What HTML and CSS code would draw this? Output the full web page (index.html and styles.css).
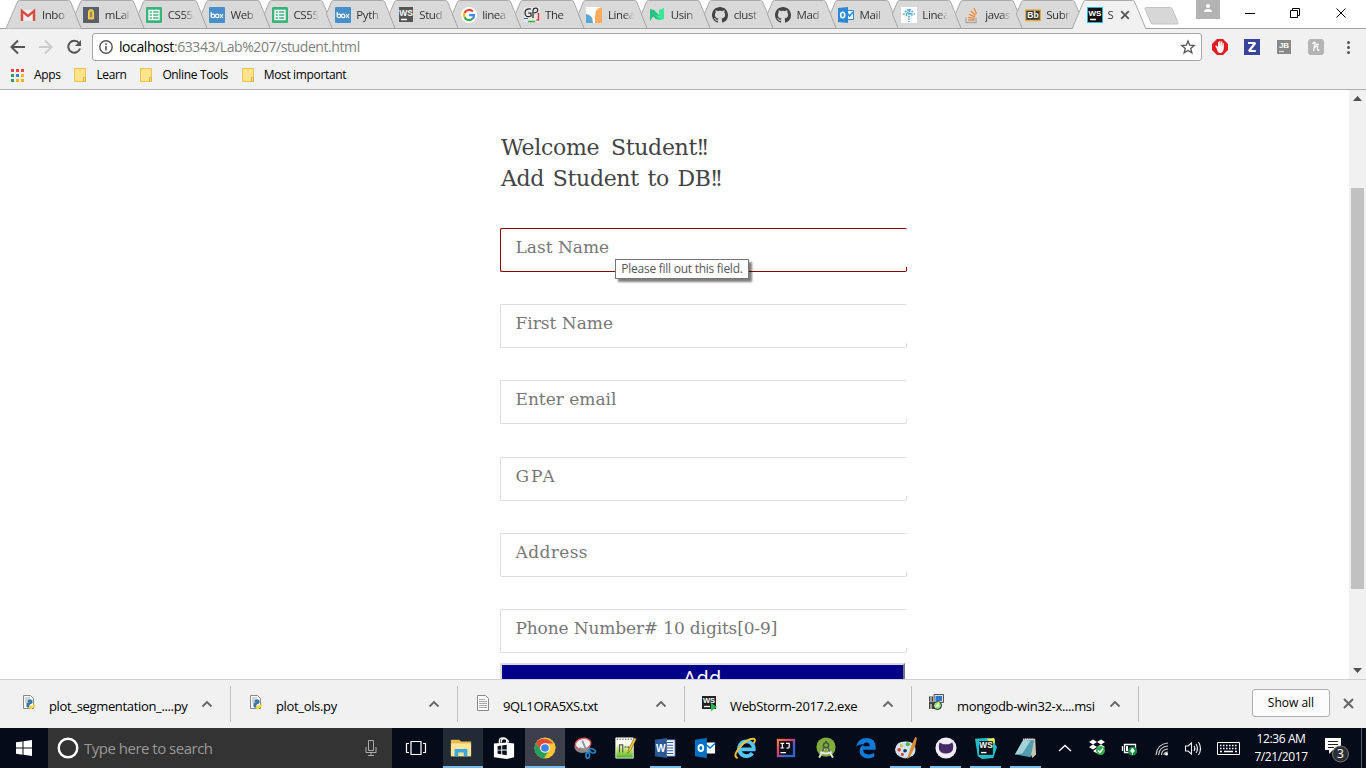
FILE: index.html
```
<!DOCTYPE html>
<html lang="en">
<head>
<meta charset="utf-8">
<title>Student</title>
<link rel="stylesheet" href="styles.css">
</head>
<body>
<svg class="defs" aria-hidden="true">
  <symbol id="tabshape" viewBox="0 0 76 28"><path d="M12.2 28.5 6.4 14 11.5 1.8Q12.2.5 13.500.5H62.5Q64 .5 64.6 1.8L75.5 28.5" fill="#d9d9d9" stroke="#aaa"/></symbol>
  <symbol id="sheet" viewBox="0 0 16 16"><rect width="16" height="16" rx="1" fill="#3db37c"/><path d="M3 3.5h10v9H3zM3 6.5h10M3 9.5h10M6.5 3.5v9" fill="none" stroke="#fff" stroke-width="1.3"/></symbol>
  <symbol id="box" viewBox="0 0 16 16"><rect width="16" height="16" rx="1" fill="#468fcb"/><g fill="none" stroke="#fff" stroke-width="1.2"><path d="M2.200 5v5"/><circle cx="4" cy="8.900" r="1.700"/><circle cx="8.200" cy="8.900" r="1.700"/><path d="m11 7 3 4m0-4-3 4"/></g></symbol>
  <symbol id="github" viewBox="0 0 16 16"><path fill="#444" d="M8 0C3.58 0 0 3.58 0 8c0 3.54 2.29 6.53 5.47 7.59.4.07.55-.17.55-.38 0-.19-.01-.82-.01-1.49-2.01.37-2.53-.49-2.69-.94-.09-.23-.48-.94-.82-1.13-.28-.15-.68-.52-.01-.53.63-.01 1.08.58 1.23.82.72 1.21 1.87.87 2.33.66.07-.52.28-.87.51-1.07-1.78-.2-3.64-.89-3.64-3.95 0-.87.31-1.59.82-2.15-.08-.2-.36-1.02.08-2.12 0 0 .67-.21 2.2.82.64-.18 1.32-.27 2-.27s1.36.09 2 .27c1.53-1.04 2.2-.82 2.2-.82.44 1.1.16 1.92.08 2.12.51.56.82 1.27.82 2.15 0 3.07-1.87 3.75-3.65 3.95.29.25.54.73.54 1.48 0 1.07-.01 1.93-.01 2.2 0 .21.15.46.55.38A8 8 0 0 0 16 8c0-4.42-3.58-8-8-8z"/></symbol>
  <symbol id="folder" viewBox="0 0 12 14"><path d="M.5.5h11v13H.5z" fill="#ffe38f" stroke="#eac54f"/><path d="M9.5 13.500v-4h2v4z" fill="#ffe38f" stroke="#e0b435"/></symbol>
  <symbol id="py" viewBox="0 0 14 16"><path d="M1.500.5h7l3 3v10h-10z" fill="#fff" stroke="#888"/><path d="M3 3h5M3 5h4M3 7h2" stroke="#aaa"/><path d="M5 10V8h3V7H6V5.500q2-1.500 4 0V8L7 9.500V12H5z" fill="#3a76a8" stroke="#3a76a8"/><path d="M12 8.500q2 2 .5 4H10V14q-3 .5-3-1v-2.500h4z" fill="#fdd545"/></symbol>
  <symbol id="up" viewBox="0 0 12 8"><path d="m1.500 6.500 4.500-4.500 4.500 4.500" fill="none" stroke="#666" stroke-width="1.800"/></symbol>
</svg>

<header class="browser">
  <div class="tabstrip">
    <div class="tab"><svg class="shape" viewBox="0 0 76 28"><path d="M0 28.500 11.500 1.800Q12.200.5 13.500.5H62.500Q64 .5 64.600 1.800L75.500 28.500" fill="#d9d9d9" stroke="#aaa"/></svg><svg class="fav" viewBox="0 0 16 16"><path d="M1 3h14v11H1z" fill="#eee"/><path d="M2 14V4l6 5 6-5v10" fill="none" stroke="#dd4b3e" stroke-width="2.400"/></svg><span>Inbo</span></div>
    <div class="tab"><svg class="shape"><use href="#tabshape"/></svg><svg class="fav" viewBox="0 0 16 16"><path d="M0 0h16v16H0z" fill="#596068"/><path d="M5.500 12V5a2.500 2.500 0 0 1 5 0v7z" fill="#eab945" stroke="#f4d25c"/><path d="M8 5v5M5 13.500h6" stroke="#555"/></svg><span>mLal</span></div>
    <div class="tab"><svg class="shape"><use href="#tabshape"/></svg><svg class="fav"><use href="#sheet"/></svg><span>CS55</span></div>
    <div class="tab"><svg class="shape"><use href="#tabshape"/></svg><svg class="fav"><use href="#box"/></svg><span>Web</span></div>
    <div class="tab"><svg class="shape"><use href="#tabshape"/></svg><svg class="fav"><use href="#sheet"/></svg><span>CS55</span></div>
    <div class="tab"><svg class="shape"><use href="#tabshape"/></svg><svg class="fav"><use href="#box"/></svg><span>Pyth</span></div>
    <div class="tab"><svg class="shape"><use href="#tabshape"/></svg><svg class="fav" viewBox="0 0 16 16"><path d="M1 0h14v15H1z" fill="#555"/><text x="8" y="8.500" class="glyph" font-size="8.500">WS</text><path d="M3 12.500h6" stroke="#fff" stroke-width="1.500"/></svg><span>Stud</span></div>
    <div class="tab"><svg class="shape"><use href="#tabshape"/></svg><svg class="fav" viewBox="0 0 16 16"><circle cx="8" cy="8" r="8" fill="#fff"/><g fill="none" stroke-width="2.200"><path d="M11.800 4.500A5 5 0 0 0 3.500 6" stroke="#ea4335"/><path d="M3.500 6a5 5 0 0 0 0 4.200" stroke="#fbbc05"/><path d="M3.500 10.200a5 5 0 0 0 8 1.500" stroke="#34a853"/><path d="M11.500 11.700Q13 10.500 13 8.200H8.200" stroke="#4285f4"/></g></svg><span>linea</span></div>
    <div class="tab"><svg class="shape"><use href="#tabshape"/></svg><svg class="fav" viewBox="0 0 16 16"><path d="M0 0h16v15H0z" fill="#e6e6e6"/><path d="M7 2Q1 1 1 6t6 3V6H4" fill="none" stroke="#222" stroke-width="1.200"/><path d="M9 11V4q0-3 3-3 3 1 1 4l-3 1" fill="none" stroke="#222" stroke-width="1.200"/><path d="M0 11.500h4" stroke="#36c"/><path d="M4 14.500h7" stroke="#3b3" stroke-width="1.500"/><path d="M14.500 6v7h-2" fill="none" stroke="#e33" stroke-width="1.500"/></svg><span>The</span></div>
    <div class="tab"><svg class="shape"><use href="#tabshape"/></svg><svg class="fav" viewBox="0 0 16 16"><path d="M0 0h16v16H0z" fill="#fff"/><path d="M0 7q7 1 7 9H0z" fill="#5ba8d4"/><path d="M16 0v16H9V9Q9 1 16 0z" fill="#ffad5c"/></svg><span>Linea</span></div>
    <div class="tab"><svg class="shape"><use href="#tabshape"/></svg><svg class="fav" viewBox="0 0 16 16"><path d="m1 2 4 1 6 6v4L7 12 4 9.500 1 14z" fill="#27c281"/><path d="m10 3 5-2v11l-4 1-5-5 4 1z" fill="#3ae895"/></svg><span>Usin</span></div>
    <div class="tab"><svg class="shape"><use href="#tabshape"/></svg><svg class="fav"><use href="#github"/></svg><span>clust</span></div>
    <div class="tab"><svg class="shape"><use href="#tabshape"/></svg><svg class="fav"><use href="#github"/></svg><span>Mad</span></div>
    <div class="tab"><svg class="shape"><use href="#tabshape"/></svg><svg class="fav" viewBox="0 0 16 16"><path d="M9 3.500h6.500v9H9z" fill="#fff" stroke="#2b88d4"/><path d="m9 6 2.500 3L15 5" fill="none" stroke="#2b88d4" stroke-width="1.500"/><path d="m0 1 10-1v16L0 15z" fill="#2b88d4"/><ellipse cx="4.700" cy="8" rx="2" ry="2.700" fill="none" stroke="#fff" stroke-width="1.600"/></svg><span>Mail</span></div>
    <div class="tab"><svg class="shape"><use href="#tabshape"/></svg><svg class="fav" viewBox="0 0 16 16"><path d="M0 0h16v16H0z" fill="#fff"/><path d="M2 7h4m4 0h4M4 5l4-3 4 3M5 9l3-5 3 5M8 6v9" fill="none" stroke="#54a8cf" stroke-width="1.700" stroke-dasharray="1.700 1"/></svg><span>Linea</span></div>
    <div class="tab"><svg class="shape"><use href="#tabshape"/></svg><svg class="fav" viewBox="0 0 16 16"><path d="M2 10.500v5h10v-5" fill="none" stroke="#aaa" stroke-width="1.300"/><path d="M4 13h6.500M4 10.300l6.500 1M5 7.300l6 2.500M7 4l4.500 4.500M10 1l2.500 6" stroke="#f08a3c" stroke-width="1.300"/></svg><span>javas</span></div>
    <div class="tab shift"><svg class="shape"><use href="#tabshape"/></svg><svg class="fav" viewBox="0 0 16 16"><path d="M.7 3h14.600v10.500H.7z" fill="#333" stroke="#e4ad42" stroke-width="1.300"/><text x="8" y="11.300" class="glyph" font-size="8.500">Bb</text></svg><span>Subr</span></div>
    <div class="tab active"><svg class="shape" viewBox="0 0 76 29"><path d="M0 29 11.500 1.800Q12.200.5 13.500.5H60.500Q62 .5 62.600 1.800L74 29" fill="#f1f1f1" stroke="#aaa"/></svg><svg class="fav" viewBox="0 0 16 16"><path d="M.5.500h15v15H.5z" fill="#111" stroke="#20bcdf"/><text x="8" y="8.500" class="glyph" font-size="8">WS</text><path d="M3 12.500h6" stroke="#fff" stroke-width="1.500"/></svg><span>S</span><svg class="tabclose" viewBox="0 0 10 10"><path d="m1.200 1.200 7.600 7.600m0-7.600-7.600 7.600" stroke="#555" stroke-width="1.800"/></svg></div>
    <svg class="newtab" viewBox="0 0 36 18"><path d="M3 .5h23q1.500 0 2 1l6 14q.5 1.500-1 1.500H9q-1.500 0-2-1L1 2Q.5.500 3 .5z" fill="#d7d7d7" stroke="#c3c3c3"/></svg>
    <svg class="avatar" viewBox="0 0 24 19"><path d="M0 0h24v19H0z" fill="#b3b3b3"/><circle cx="12" cy="6" r="2" fill="#fff"/><path d="M8 12q0-3 4-3t4 3z" fill="#fff"/></svg>
    <svg class="winctl" viewBox="0 0 100 12"><path d="M0 6.500h10M45.500 3.500h7v7h-7zM47.500 3.500v-2h7v7h-2M91.500 1.500l9 9m0-9-9 9" fill="none" stroke="#000"/></svg>
  </div>
  <div class="toolbar">
    <svg class="nav" viewBox="0 0 92 28"><g fill="none" stroke-width="2"><path d="M25 14H12m6-6.500L11.500 14l6.500 6.500" stroke="#555"/><path d="M39 14h12m-6-6.500 6.500 6.500-6.500 6.500" stroke="#ccc"/><path d="M79 10a6 6 0 1 0 1 5.500" stroke="#555"/></g><path d="M81 7v6h-6z" fill="#555"/></svg>
    <div class="omnibox">
      <svg class="info" viewBox="0 0 14 14"><circle cx="7" cy="7" r="6.200" fill="none" stroke="#555" stroke-width="1.400"/><path d="M7 6v4.500M7 3.300v1.600" stroke="#555" stroke-width="1.600"/></svg>
      <span class="url"><b>localhost</b>:63343/Lab%207/student.html</span>
      <svg class="star" viewBox="0 0 14 14"><path d="m7 1 1.700 4.200 4.500.3-3.500 2.900 1.200 4.500L7 10.400l-3.900 2.500 1.200-4.500L.8 5.500l4.500-.3z" fill="none" stroke="#555" stroke-width="1.300"/></svg>
    </div>
    <div class="exts">
      <svg viewBox="0 0 16 16"><path d="M5 0h6l5 5v6l-5 5H5l-5-5V5z" fill="#e01b22"/><path d="M4.500 9 3.200 7l1.300-.5L6 8V3h1v4l.3-5h1.200v5l.6-4.500h1.200V8l.5-4h1v5q-.3 5-4 5-2 0-3.300-5z" fill="#fff"/></svg>
      <svg viewBox="0 0 16 16"><path d="M0 0h16v16H0z" fill="#38459a"/><path d="M4 4h7.200L5 12h6.800" fill="none" stroke="#fff" stroke-width="2.200" stroke-linejoin="bevel"/></svg>
      <svg viewBox="0 0 16 16"><path d="M1 1h14v14H1z" fill="#888"/><text x="8" y="9" class="glyph" font-size="8">JB</text><path d="M3 12.500h5" stroke="#ddd" stroke-width="1.300"/></svg>
      <svg viewBox="0 0 16 16"><rect width="16" height="16" rx="3" fill="#b4b4b4"/><path d="M4.500 5q3-3.500 2.500 0L5.500 12M6.500 8.500q3.500-3 3 0-.5 3.500 2 2.500M8 5.500h3" fill="none" stroke="#fff" stroke-width="1.300"/></svg>
      <svg viewBox="0 0 16 16"><circle cx="8.500" cy="3.500" r="1.500" fill="#555"/><circle cx="8.500" cy="8.500" r="1.500" fill="#555"/><circle cx="8.500" cy="13.500" r="1.500" fill="#555"/></svg>
    </div>
  </div>
  <nav class="bookmarks">
    <a><svg class="apps" viewBox="0 0 13 13"><path d="M0 0h3v3H0zm5 0h3v3H5zm5 0h3v3h-3z" fill="#e8453c"/><path d="M0 5h3v3H0zm0 5h3v3H0z" fill="#2f9e58"/><path d="M5 5h3v3H5z" fill="#3b82f0"/><path d="M10 5h3v3h-3zm-5 5h3v3H5zm5 0h3v3h-3z" fill="#f9b411"/></svg><span>Apps</span></a>
    <a><svg class="folder"><use href="#folder"/></svg><span>Learn</span></a>
    <a><svg class="folder"><use href="#folder"/></svg><span>Online Tools</span></a>
    <a><svg class="folder"><use href="#folder"/></svg><span>Most important</span></a>
  </nav>
</header>

<main class="page">
  <form class="form">
    <h1><span class="w1">Welcome Student</span><span class="bang">!!</span><br><span class="w2">Add Student to DB</span><span class="bang">!!</span></h1>
    <div class="field invalid"><span>Last Name</span><div class="tooltip">Please fill out this field.</div></div>
    <div class="field"><span>First Name</span></div>
    <div class="field"><span>Enter email</span></div>
    <div class="field gpa"><span>GPA</span></div>
    <div class="field address"><span>Address</span></div>
    <div class="field last"><span>Phone Number# 10 digits[0-9]</span></div>
    <div class="add">Add</div>
  </form>
  <div class="scrollbar">
    <svg viewBox="0 0 17 17"><path d="m4 11 4.500-5 4.500 5z" fill="#505050"/></svg>
    <div class="thumb"></div>
    <svg viewBox="0 0 17 17"><path d="m4 6 4.500 5L13 6z" fill="#505050"/></svg>
  </div>
</main>

<section class="downloads">
  <div class="dl"><svg class="file"><use href="#py"/></svg><span>plot_segmentation_....py</span><svg class="up"><use href="#up"/></svg></div>
  <div class="dl"><svg class="file"><use href="#py"/></svg><span>plot_ols.py</span><svg class="up"><use href="#up"/></svg></div>
  <div class="dl"><svg class="file" viewBox="0 0 14 16"><path d="M1.500.5h8l3 3v12h-11z" fill="#fff" stroke="#888"/><path d="M3 4.500h6m-6 2h8m-8 2h8m-8 2h8m-8 2h8" stroke="#aaa"/></svg><span>9QL1ORA5XS.txt</span><svg class="up"><use href="#up"/></svg></div>
  <div class="dl"><svg class="file" viewBox="0 0 14 16"><path d="M-1 1h14v13H-1z" fill="#222"/><text x="6" y="7.500" class="glyph" font-size="7.500">WS</text><path d="M1 11.500h6" stroke="#fff" stroke-width="1.300"/><path d="m8 8 6 4-6 4z" fill="#2ab34a"/></svg><span>WebStorm-2017.2.exe</span><svg class="up"><use href="#up"/></svg></div>
  <div class="dl"><svg class="file" viewBox="1 1 14 16"><path d="M5 .5h9.500v8H5z" fill="#ddd" stroke="#555"/><path d="M6.500 2H13v5H6.500z" fill="#2878d8"/><path d="M0 2.500h4v5H0zM0 8h10v7H0z" fill="#444"/><path d="M2 3v4m0 3v5" stroke="#fff"/><circle cx="8.500" cy="11.500" r="4" fill="#8fe08b" stroke="#222"/><path d="m6 13 2.500-1.500L10 8" stroke="#fe4" stroke-width="1.500" fill="none"/><circle cx="8.500" cy="11.500" r="1.200" fill="#fff"/></svg><span>mongodb-win32-x....msi</span><svg class="up"><use href="#up"/></svg></div>
  <div class="showall">Show all</div>
  <svg class="dlclose" viewBox="0 0 11 11"><path d="m1 1 9 9m0-9-9 9" stroke="#666" stroke-width="2"/></svg>
</section>

<footer class="taskbar">
  <div class="start"><svg width="16" height="16" viewBox="0 0 16 16"><path d="m0 2.300 6.500-.9v6.100H0zM7.500 1.200 16 0v7.500H7.500zM0 8.500h6.500v6.200L0 13.800zm7.500 0H16V16l-8.500-1.200z" fill="#fff"/></svg></div>
  <div class="search"><svg width="22" height="22" viewBox="0 0 22 22"><circle cx="11" cy="11" r="9.300" fill="none" stroke="#fff" stroke-width="2.400"/></svg><span>Type here to search</span><svg class="mic" viewBox="0 0 12 18"><path d="M3.500 1.500h5v10h-5zM1 8v5.500h10V8M6 14v3M3 16.500h6" fill="none" stroke="#aaa"/></svg></div>
  <div class="tv"><svg width="20" height="16" viewBox="0 0 20 16"><path d="M5 1.500h10v13H5zM3 3.500H.5v9H3m14-9h2.500v9H17" fill="none" stroke="#fff" stroke-width="1.200"/></svg></div>
  <div class="app explorer open"><svg viewBox="0 0 24 24"><path d="M1 3h9l2 2h11v16H1z" fill="#e9bd4a"/><path d="M1 7h22v14H1z" fill="#ffe59a"/><path d="M5 21v-8h14v8h-4v-4H9v4z" fill="#36a9e1"/></svg></div>
  <div class="app store"><svg viewBox="0 0 24 24"><path d="M7 7V4q0-3 4-3t4 3v3M9 6q0-5 4-4t4 4" fill="none" stroke="#fff" stroke-width="1.500"/><path d="m1 7 14-1 8 1v15l-8 2-14-2z" fill="#fff"/><path d="m5 10 4-.6v4.400H5zm5-.7 5-.8v5.200h-5zM5 14.600h4v4.300l-4-.5zm5 0h5v5.200l-5-.8z" fill="#0b1020"/></svg></div>
  <div class="app chrome open"><svg viewBox="0 0 24 24"><circle cx="12" cy="12" r="11.500" fill="#f9c734"/><path d="M12 12H22.500A11.500 11.500 0 0 0 2 6.500l5.500 8z" fill="#e14a3c"/><path d="M2 6.500A11.500 11.500 0 0 0 11 23.500l5-9-8.500 0z" fill="#25a05a"/><path d="M12 7h10.500l1 5-8.500 6-3 5 5-8z" fill="#f9c734"/><circle cx="12" cy="12" r="5.300" fill="#fff"/><circle cx="12" cy="12" r="4.200" fill="#3f83ee"/></svg></div>
  <div class="app"><svg viewBox="0 0 24 24"><ellipse cx="9" cy="11" rx="8.500" ry="6.500" fill="#888"/><ellipse cx="10" cy="7.500" rx="8.500" ry="6" fill="#f2f2f2" stroke="#d35b60" stroke-width="1.500" transform="rotate(-10 10 8)"/><path d="m6 12 12 4M9 4l6 14" stroke="#8d9298" stroke-width="2"/><g fill="none" stroke="#2584cb" stroke-width="1.800"><ellipse cx="15" cy="20" rx="2" ry="3.300"/><ellipse cx="20" cy="15" rx="3.500" ry="2" transform="rotate(25 20 15)"/></g></svg></div>
  <div class="app"><svg viewBox="0 0 24 24"><defs><linearGradient id="npp" x2="0" y2="1"><stop offset=".3" stop-color="#fbfff0"/><stop offset=".65" stop-color="#b5df59"/><stop offset="1" stop-color="#45ad2c"/></linearGradient></defs><path d="M2 1h19v22H2z" fill="url(#npp)" stroke="#eee"/><path d="M3 2.500h17" stroke="#888" stroke-width="1.500" stroke-dasharray="1.500 1.500"/><path d="M6 8v9M6 8.500h3.500V17m2-6h2m1 0h2" fill="none" stroke="#555" stroke-width="1.300"/><path d="m15 18 1-5 6-12 2.500 1-6 12z" fill="#f2c238" stroke="#704e22" stroke-width=".6"/></svg></div>
  <div class="app open"><svg viewBox="0 0 24 24"><path d="M12 3h11v18H12z" fill="#fff" stroke="#2b5797"/><path d="M14 6h7m-7 3h7m-7 3h7m-7 3h7m-7 3h7" stroke="#2b5797" stroke-width="1.300"/><path d="m1 3 13-2v22L1 21z" fill="#2b5797"/><text x="7.500" y="16" class="glyph" font-size="11">W</text></svg></div>
  <div class="app"><svg viewBox="0 0 24 24"><path d="M12 6h11v12H12z" fill="#fff"/><path d="m12 7 5.500 5L23 7" fill="none" stroke="#0072c6" stroke-width="1.500"/><path d="m1 3 13-2v22L1 21z" fill="#0072c6"/><ellipse cx="7.500" cy="12" rx="2.600" ry="3.300" fill="none" stroke="#fff" stroke-width="2"/></svg></div>
  <div class="app"><svg viewBox="0 0 24 24"><path d="M20 17.500a8 8 0 1 1 1.500-4H7.500" fill="none" stroke="#54c5f4" stroke-width="4.200"/><path d="M4 23Q-2 21 6.500 11T22 2q2 1-.5 5" fill="none" stroke="#f5c431" stroke-width="2"/></svg></div>
  <div class="app"><svg viewBox="0 0 24 24"><defs><linearGradient id="ij" x2="1" y2="1"><stop stop-color="#f68b2c"/><stop offset=".4" stop-color="#e23b73"/><stop offset=".7" stop-color="#2f65db"/></linearGradient></defs><path d="M2 2h20v20H2z" fill="url(#ij)"/><path d="M4.500 4.500h15v15h-15z" fill="#101018"/><path d="M6 7h4M8 7v5m-2 0h4m2-5h3.500v4q0 1.500-3 1M6 17h6" fill="none" stroke="#fff" stroke-width="1.300"/></svg></div>
  <div class="app"><svg viewBox="0 0 24 24"><circle cx="12" cy="11" r="10.500" fill="#80ac3d"/><path d="m11 11-6.500 11.500M13 11l6.500 11.500M6 16q6 4 12 0" fill="none" stroke="#e4e8e2" stroke-width="2.200"/><path d="m11 9-3 7M13 9l3 7M12 4v3" stroke="#536344" stroke-width="2"/><circle cx="12" cy="9" r="2.800" fill="#80ac3d" stroke="#455838" stroke-width="1.700"/></svg></div>
  <div class="app"><svg viewBox="0 0 24 24"><path d="M1 11Q3 1 13 1q9.500 1 9.500 9v4H9q0 5 6 5 3 0 6-1.500V21.500q-3 2-7 2-9-1-9-9 1-5 5-6.500-6-.5-9 3zm8-1h7q0-4-3.500-4T9 10z" fill="#0f7ad8"/></svg></div>
  <div class="app open"><svg viewBox="0 0 24 24"><path d="M0 14Q1 5 11 5t11 6q1 6-2 9-5 4-11 3-8-2-9-9z" fill="#cfe4f0"/><circle cx="4.500" cy="14" r="2" fill="#d64a38"/><circle cx="7" cy="9.500" r="1.800" fill="#e8b938"/><circle cx="14" cy="8" r="2.200" fill="#58ad42"/><circle cx="11" cy="15" r="2" fill="#17365c"/><circle cx="8" cy="19" r="1.800" fill="#d64a38"/><path d="m13 24 5-15 4-9 2 1-2 9-6 12z" fill="#d98c36"/></svg></div>
  <div class="app open"><svg viewBox="0 0 24 24"><circle cx="12" cy="12" r="11.500" fill="#f0edf5"/><path d="M5 6 9 8h6l4-2q1.500 3 .5 8Q18 18 12 18t-7.500-4q-1-5 .5-8z" fill="#432b65"/></svg></div>
  <div class="app open"><svg viewBox="0 0 24 24"><path d="m0 2 12-1 9 1 1 6 2 3-4 12-12 1-5-3z" fill="#20bfc8"/><path d="m13 2 8-1 1 5-6 1z" fill="#e7ed5b"/><path d="M4.500 4.500h15v15h-15z" fill="#111"/><text x="12" y="12.500" class="glyph" font-size="9">WS</text><path d="M6.500 17h6" stroke="#fff" stroke-width="1.500"/></svg></div>
  <div class="app open"><svg viewBox="0 0 24 24"><path d="M10 2h12l1 17-4 4z" fill="#c9c5b4"/><path d="M9 3h12l-4 19-17-3z" fill="#549caf"/><path d="m9 3 8 1-9 14-8 1z" fill="#a4d2d8"/><path d="M9 2.500h12" stroke="#eee" stroke-width="2" stroke-dasharray="1 1"/></svg></div>
  <div class="tray">
    <svg class="traysvg" viewBox="1046 0 200 40"><path d="m1059 23 6-5.500 6 5.500" fill="none" stroke="#fff" stroke-width="1.400"/><path d="m1089 14 4-2.500 4 2.500-4 2.500zm8 0 4-2.500 4 2.500-4 2.500zm-8 5 4-2.500 4 2.500-4 2.500zm8 0 4-2.500 4 2.500-4 2.500zm-4 4 4-2.500 4 2.500-4 2.500z" fill="#fff"/><circle cx="1100.500" cy="22.500" r="4.500" fill="#35ab4a"/><path d="m1098 22.500 2 2 3-4" fill="none" stroke="#fff" stroke-width="1.300"/><path d="M1124.500 16.500h11v8h-11zM1122.500 18v5" fill="none" stroke="#fff" stroke-width="1.300"/><path d="M1126 18h2v5h-2z" fill="#fff"/><circle cx="1132.500" cy="23" r="4.500" fill="#168a43"/><path d="m1130.500 23 2-3 2 3-2 2zM1132.500 24v3" fill="#fff" stroke="#fff" stroke-width=".7"/><g fill="none" stroke="#ccc" stroke-width="1.200"><path d="M1156 27q1-11 12-12M1158.500 27q1-8.500 9.500-9M1161.500 27q0-5.500 6.500-6M1164 27q0-3 4-3"/></g><circle cx="1166.500" cy="26" r="1.500" fill="#fff"/><path d="M1185.500 18h2.500l3.500-3v11l-3.500-3h-2.500zM1194 18q2 2.500 0 5m2-7q3 4.500 0 9m2.500-11q4 6.500 0 13" fill="none" stroke="#eee" stroke-width="1.100"/><path d="M1217.500 14.500h22v12h-22z" fill="none" stroke="#fff"/><path d="M1220 17.500h18M1220 20.500h18" stroke="#fff" stroke-width="1.400" stroke-dasharray="1.500 1.500"/><path d="M1220 23.500h2m2 0h9m2 0h2" stroke="#fff" stroke-width="1.400"/></svg>
    <div class="clock"><span class="time">12:36 AM</span><span class="date">7/21/2017</span></div>
    <svg class="notif" viewBox="0 0 28 30"><path d="M1 5h16v12H9l-4 4v-4H1z" fill="#fff"/><path d="M4 8.500h10m-10 3h10m-10 3h6" stroke="#222"/><circle cx="16.500" cy="21" r="8" fill="#2c2e34" stroke="#777"/><text x="16.500" y="25" text-anchor="middle" font-family="Noto Sans,sans-serif" font-size="12" fill="#fff">3</text></svg>
  </div>
</footer>
</body>
</html>
```
FILE: styles.css
```
* { box-sizing: border-box; }
body {
  margin: 0; width: 1366px; height: 768px; overflow: hidden;
  display: flex; flex-direction: column; background: #fff; color: #000;
  font-family: "Open Sans", "Noto Sans", sans-serif; font-size: 12px;
}
svg { display: block; flex: none; overflow: visible; }
.defs { position: absolute; width: 0; height: 0; }
.glyph { fill: #fff; font-family: "Liberation Sans", sans-serif; font-weight: bold; text-anchor: middle; }

/* Browser chrome */
.browser { height: 90px; flex: none; background: #f1f1f1; border-bottom: 1px solid #b0b0b0; }
.tabstrip { height: 29px; display: flex; align-items: flex-start; padding-left: 6px; background: #fff; border-bottom: 1px solid #a0a0a0; }
.tab { position: relative; width: 62.900px; height: 28px; flex: none; display: flex; align-items: center; padding: 2px 0 0 14.400px; }
.tab .shape { position: absolute; left: 0; top: 0; width: 76px; height: 28px; }
.fav { position: relative; width: 16px; height: 16px; }
.tab span {
  position: relative; width: 27px; margin-left: 5.500px; white-space: nowrap; color: #333; font-size: 11.500px; line-height: 18px;
  letter-spacing: -.4px;
  -webkit-mask-image: linear-gradient(90deg, #000 60%, transparent 96%);
  mask-image: linear-gradient(90deg, #000 60%, transparent 96%);
}
.tab.shift { margin-left: -2px; }
.tab.active { z-index: 1; margin-left: -1px; }
.tab.active .shape { height: 29px; }
.tab.active span { width: 7px; margin-left: 5px; }
.tabclose { position: relative; width: 10px; height: 10px; margin-left: 5px; }
.newtab { width: 36px; height: 18px; margin: 7px 0 0 9px; }
.avatar { width: 24px; height: 19px; margin-left: 16px; }
.winctl { width: 100px; height: 12px; margin: 7px 0 0 25px; }
.toolbar { display: flex; align-items: center; height: 36px; }
.nav { width: 92px; height: 28px; }
.omnibox { width: 1110px; height: 28px; display: flex; align-items: center; padding: 0 6px; background: #fff; border: 1px solid #a6a6a6; border-radius: 3px; }
.info { width: 14px; height: 14px; }
.url { flex: 1; margin-left: 6px; font-size: 14px; color: #808080; line-height: 20px; letter-spacing: -.420px; }
.url b { font-weight: normal; color: #000; }
.star { width: 14px; height: 14px; }
.exts { display: flex; gap: 16px; padding-left: 10px; }
.exts svg { width: 16px; height: 16px; }
.bookmarks { display: flex; height: 20px; align-items: center; padding-left: 11px; letter-spacing: -.350px; }
.bookmarks a { display: flex; align-items: center; }
.bookmarks span { padding-bottom: 1px; }
.apps { width: 13px; height: 13px; margin-right: 10px; }
.folder { width: 12px; height: 14px; margin-right: 10px; }
.bookmarks a + a { margin-left: 13.800px; }

/* Page */
.page { height: 589px; flex: none; display: flex; overflow: hidden; }
.form { width: 407px; margin: 0 442px 0 500px; flex: none; font-family: "DejaVu Serif", serif; }
h1 { margin: 42px 0 34px 1px; font-size: 22px; font-weight: normal; line-height: 31px; color: #444; white-space: nowrap; }
.w1 { word-spacing: 5px; letter-spacing: -.300px; }
.w2 { word-spacing: 2px; letter-spacing: -.320px; }
.bang { letter-spacing: -4px; margin-left: -1px; }
.field { position: relative; height: 44px; margin-bottom: 32.200px; padding: 0 15px 0 14.500px; border: 1px solid #ddd; border-right: 0; border-radius: 2px; font-size: 17px; line-height: 36px; color: #777; white-space: nowrap; }
.field::after { content: ""; position: absolute; right: 0; bottom: 0; width: 1px; height: 4px; background: #ddd; }
.field.invalid { border-color: #8b0000; }
.field.invalid::after { background: #8b0000; }
.field.gpa { letter-spacing: 1.800px; margin-top: 32.600px; }
.field.address { letter-spacing: .4px; }
.field.last { margin-bottom: 9.500px; letter-spacing: -.140px; }
.tooltip { position: absolute; z-index: 2; left: 114px; top: 30px; width: 134px; height: 20px; border: 1px solid #767676; background: #fff; box-shadow: 3px 3px 2px rgba(0,0,0,.5); color: #575757; font: 12px/18px "Open Sans", sans-serif; letter-spacing: -.260px; text-align: center; }
.add { width: 405px; height: 40px; border: 2px solid #ddd; border-right-color: #777; background: #00008b; color: #fff; text-align: center; font: 20px/25px "Noto Sans", sans-serif; letter-spacing: .4px; }
.scrollbar { width: 17px; flex: none; display: flex; flex-direction: column; background: #f1f1f1; }
.scrollbar svg { width: 17px; height: 17px; }
.thumb { width: 13px; height: 401px; margin: 81px 2px 73px; flex: none; background: #c1c1c1; }

/* Downloads shelf */
.downloads { height: 49px; flex: none; display: flex; align-items: center; background: #f1f1f1; border-top: 1px solid #d0d0d0; font-size: 13px; }
.dl { position: relative; width: 227px; height: 36px; display: flex; align-items: center; border-right: 1px solid #c0c0c0; padding: 0 17px 0 19px; }
.dl:first-child { width: 231px; padding: 0 17px 0 22px; }
.dl .file { width: 14px; height: 16px; margin: 9px 13px 0 0; align-self: flex-start; }
.dl:not(:first-child) .file { margin-left: -1px; }
.dl span { line-height: 18px; padding-top: 3px; white-space: nowrap; letter-spacing: -.340px; }
.up { width: 12px; height: 8px; margin-left: auto; }
.showall { width: 78px; height: 28px; margin: -2px 0 0 auto; border: 1px solid #b0b0b0; border-radius: 3px; background: #fcfcfc; text-align: center; font-size: 12px; line-height: 26px; }
.dlclose { width: 11px; height: 11px; margin: -2px 12px 0 13px; }

/* Taskbar */
.taskbar { height: 40px; flex: none; display: flex; background: #060b19; color: #fff; }
.start { width: 48px; display: flex; align-items: center; justify-content: center; }
.search { width: 344px; display: flex; align-items: center; padding: 0 15px 0 9px; background: #333; color: #999; font-size: 15px; }
.search span { margin-left: 5px; letter-spacing: -.5px; }
.mic { width: 12px; height: 18px; margin-left: auto; }
.tv { width: 51px; padding-left: 14px; display: flex; align-items: center; }
.app { width: 40.080px; flex: none; display: flex; align-items: center; justify-content: center; border-bottom: 2px solid transparent; padding-top: 2px; }
.app svg { width: 22px; height: 22px; }
.app.open { background-image: linear-gradient(#76b9ed, #76b9ed); background-size: 31px 2px; background-repeat: no-repeat; background-position: center bottom; background-origin: border-box; }
.app.explorer { width: 40px; background-color: #222a35; background-size: 100% 2px; padding-right: 5px; }
.app.store { width: 42px; }
.app.chrome { background-color: #3b404c; background-size: 100% 2px; }
.tray { display: flex; flex: 1; align-items: center; border-right: 1px solid #555b66; margin-right: 4px; }
.traysvg { width: 200px; height: 40px; }
.clock { width: 70px; display: flex; flex-direction: column; align-items: center; line-height: 18px; letter-spacing: -.4px; }
.notif { width: 28px; height: 30px; margin-left: 8px; }
```
